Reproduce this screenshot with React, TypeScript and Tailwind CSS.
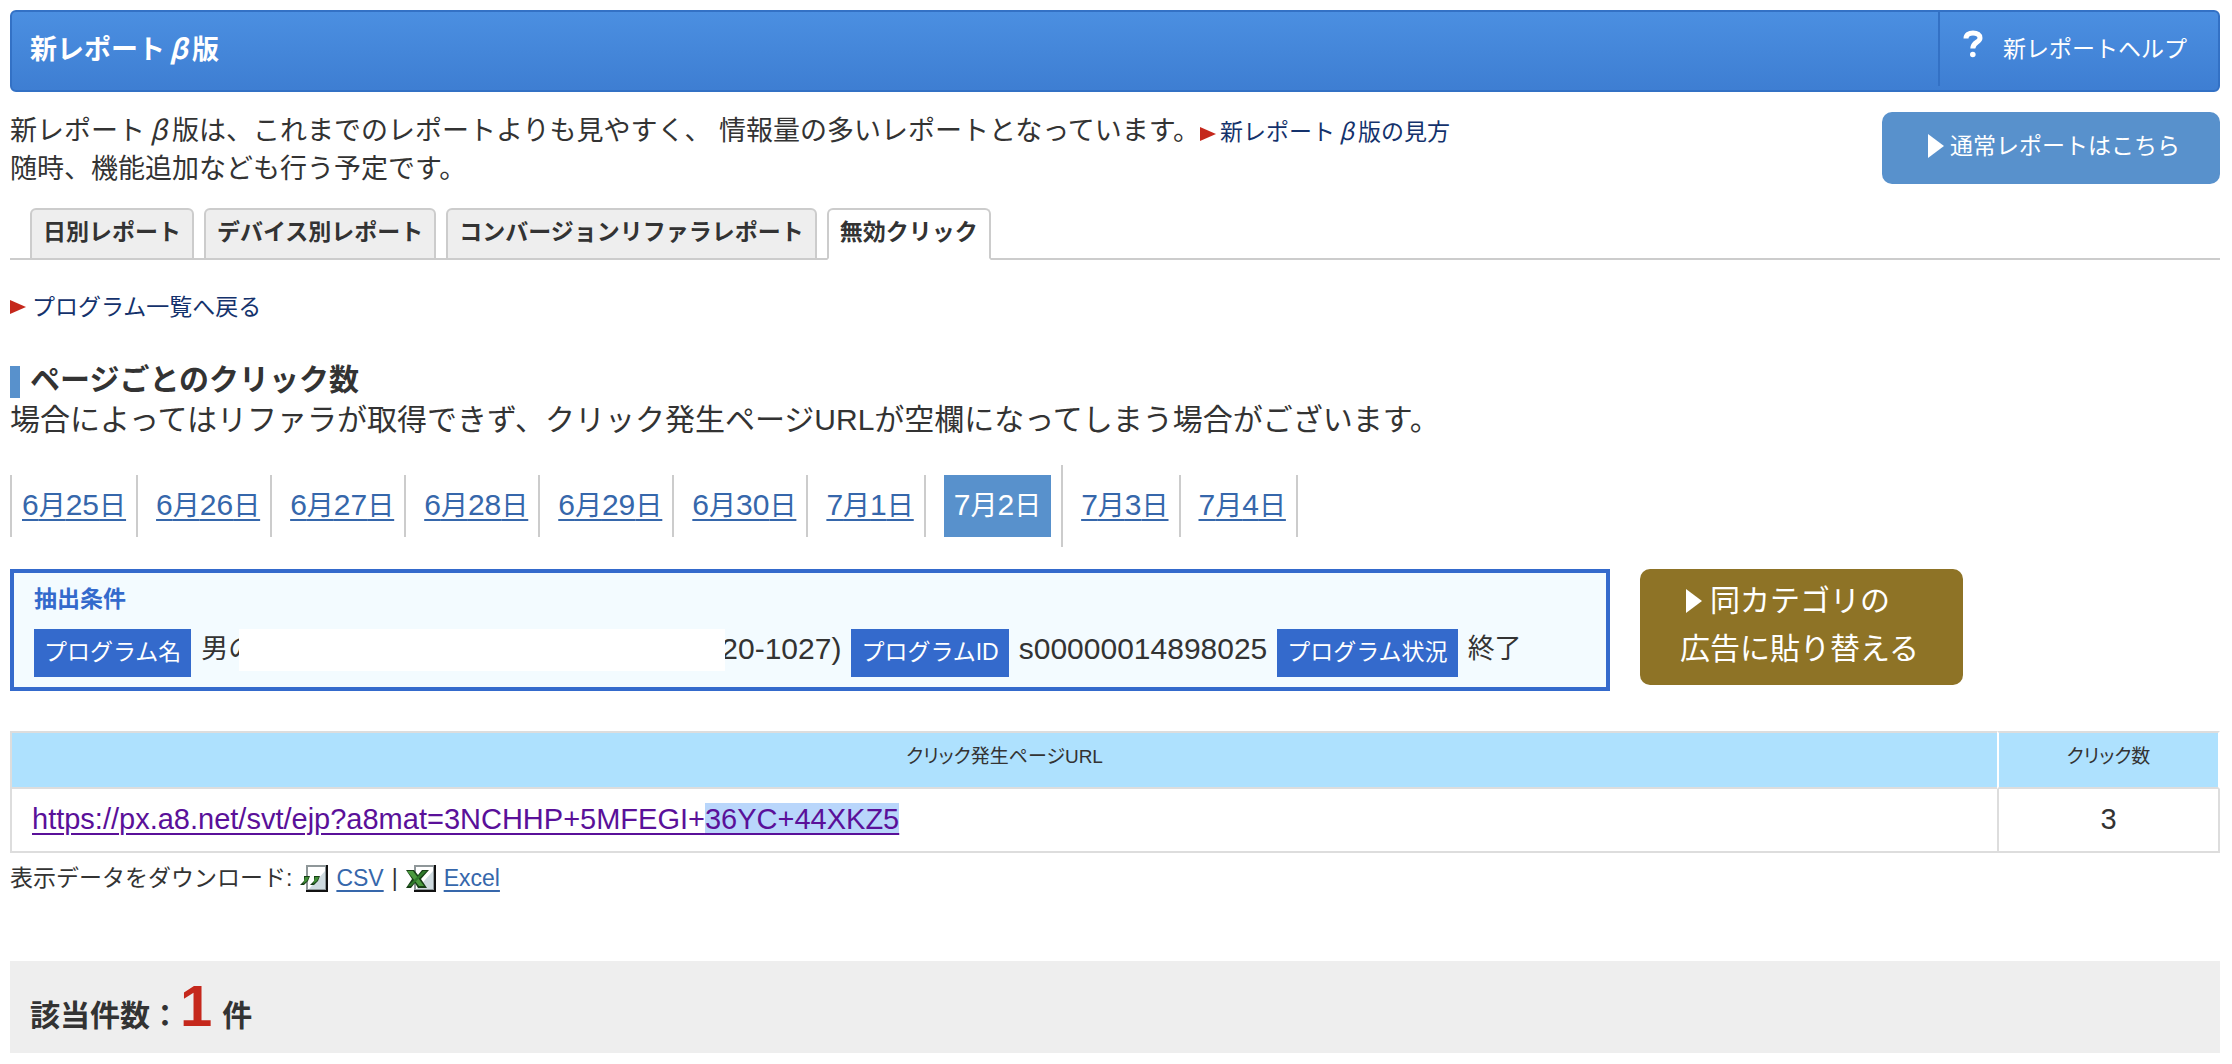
interface TriangleProps {
  className: string;
}

const tabs = [
  { label: "日別レポート", active: false },
  { label: "デバイス別レポート", active: false },
  { label: "コンバージョンリファラレポート", active: false },
  { label: "無効クリック", active: true },
];

const dates = [
  { month: 6, day: 25 },
  { month: 6, day: 26 },
  { month: 6, day: 27 },
  { month: 6, day: 28 },
  { month: 6, day: 29 },
  { month: 6, day: 30 },
  { month: 7, day: 1 },
  { month: 7, day: 2, selected: true },
  { month: 7, day: 3 },
  { month: 7, day: 4 },
];

const Triangle = ({ className }: TriangleProps) => (
  <svg
    className={className}
    viewBox="0 0 10 10"
    preserveAspectRatio="none"
    fill="currentColor"
    aria-hidden="true"
  >
    <path d="M0 0L10 5L0 10Z" />
  </svg>
);

const HelpIcon = () => (
  <svg className="w-5 h-7" viewBox="0 0 20 28" fill="none" aria-hidden="true">
    <path
      d="M3 8.5C3 4.8 6 3 10 3C14.4 3 17 5 17 8C17 12.5 9.8 12 9.8 18.5"
      stroke="#fff"
      strokeWidth="5"
    />
    <circle cx="9.8" cy="24.5" r="2.8" fill="#fff" />
  </svg>
);

/* full-width slanted beta */
const Beta = () => (
  <i className="inline-block w-[1em] text-center leading-none font-['Noto_Sans_CJK_JP',sans-serif]">
    β
  </i>
);

/* sheet with a shaded corner, shared by both download icons */
const Sheet = () => (
  <>
    <path d="M6 1H28V28H6Z" fill="#111" />
    <path d="M6 1H26V26H6Z" fill="#8f9799" />
    <path d="M8 3H25V25H8Z" fill="#fff" />
    <path d="M25 7V25H9Z" fill="#cfdbe0" />
  </>
);

const CsvIcon = () => (
  <svg className="w-7 h-7" viewBox="0 0 28 28" aria-hidden="true">
    <Sheet />
    <path d="M4 12H10L8 17L4 21H0L4 17Z" fill="#173f16" />
    <path d="M14 12H20L18 17L14 21H10L14 17Z" fill="#173f16" />
    <path d="M5 13H9L7 17L3 20Z" fill="#3f8c36" />
    <path d="M15 13H19L17 17L13 20Z" fill="#3f8c36" />
  </svg>
);

const ExcelIcon = () => (
  <svg className="w-[30px] h-7" viewBox="-2 0 30 28" aria-hidden="true">
    <Sheet />
    <path
      d="M-2 6H6L10 11L14 6H21L13 15L19 24H10L7 19L3 24H-2L4 15Z"
      fill="#173f16"
    />
    <path d="M-1 7H5L16 22H11Z" fill="#4b9a3f" />
    <path d="M15 7H19L3 22H0Z" fill="#2f7a2a" />
  </svg>
);

const Header = () => (
  <header className="flex items-start justify-between h-[82px] border-2 border-[#3371c5] rounded-md bg-linear-to-b from-[#4b8fe1] to-[#3e7ed2] text-white">
    <h1 className="pl-[18px] pt-[18px] text-[27px] leading-10 font-bold">
      新レポート
      <Beta />版
    </h1>
    <a
      href="#help"
      className="flex items-start h-[74px] pl-[23px] pr-[31px] border-l-2 border-[#3371c5]"
    >
      <span className="pt-[18px]">
        <HelpIcon />
      </span>
      <span className="pl-5 pt-[17px] text-[23px] leading-10">
        新レポートヘルプ
      </span>
    </a>
  </header>
);

const Intro = () => (
  <div className="flex items-start justify-between pt-5">
    <p className="text-[27px] leading-[38px]">
      新レポート
      <Beta />
      版は、これまでのレポートよりも見やすく、
      情報量の多いレポートとなっています。
      <a href="#guide" className="text-[23px] leading-none text-[#14326c]">
        <Triangle className="inline w-4 h-3.5 mr-1 text-[#c5281c]" />
        新レポート
        <Beta />
        版の見方
      </a>
      <br />
      随時、機能追加なども行う予定です。
    </p>
    <a
      href="#normal"
      className="flex items-center shrink-0 h-[72px] pl-[46px] pr-10 pb-1 rounded-[10px] bg-[#5891cc] text-[23px] leading-8 text-white"
    >
      <Triangle className="w-4 h-6 mr-1.5" />
      通常レポートはこちら
    </a>
  </div>
);

const Tabs = () => (
  <nav className="mt-5 pl-5 border-b-2 border-[#ccc]">
    <ul className="flex gap-2.5 -mb-0.5">
      {tabs.map((tab) => (
        <li key={tab.label}>
          <a
            href="#tab"
            className={
              tab.active
                ? "block h-[52px] px-[11px] pt-1 border-2 border-b-white border-[#ccc] rounded-t-md bg-white text-[23px] leading-9 font-bold"
                : "block h-[52px] px-[11px] pt-1 border-2 border-[#ccc] rounded-t-md bg-[#eee] text-[23px] leading-9 font-bold"
            }
          >
            {tab.label}
          </a>
        </li>
      ))}
    </ul>
  </nav>
);

const DateList = () => (
  <ul className="flex items-center h-[82px] mt-[25px] text-[27px] leading-[60px]">
    {dates.map((date, i) => {
      const label = (
        <>
          <span className="text-[30px]">{date.month}</span>月
          <span className="text-[30px]">{date.day}</span>日
        </>
      );
      if (date.selected) {
        return (
          <li
            key={i}
            className="h-[82px] ml-2 p-2.5 border-r-2 border-[#ccc]"
          >
            <span className="block h-[62px] px-2.5 bg-[#5891cc] text-white">
              {label}
            </span>
          </li>
        );
      }
      return (
        <li
          key={i}
          className="h-[62px] ml-2 px-2.5 border-r-2 border-[#ccc] first:ml-0 first:border-l-2"
        >
          <a
            href="#date"
            className="text-[#3667ab] underline decoration-2 underline-offset-4"
          >
            {label}
          </a>
        </li>
      );
    })}
  </ul>
);

const Tag = ({ children }: { children: string }) => (
  <dt className="h-12 px-2.5 pt-0.5 bg-[#346acc] text-[23px] leading-[42px] text-white">
    {children}
  </dt>
);

const Conditions = () => (
  <div className="flex items-start gap-[30px] mt-[22px]">
    <section className="w-[1600px] h-[122px] px-5 pt-1.5 border-4 border-[#346acc] bg-[#f3fbff]">
      <h3 className="text-[23px] leading-10 font-bold text-[#346acc]">
        抽出条件
      </h3>
      <dl className="flex items-start gap-2.5 mt-2.5 text-[27px] leading-10">
        <Tag>プログラム名</Tag>
        <dd className="flex">
          男の
          {/* program name is blanked out */}
          <span className="relative w-[486px] h-[42px] -ml-4 -mr-1 bg-white" />
          <span className="text-[30px]">20-1027)</span>
        </dd>
        <Tag>プログラムID</Tag>
        <dd className="text-[30px]">s00000014898025</dd>
        <Tag>プログラム状況</Tag>
        <dd>終了</dd>
      </dl>
    </section>
    <a
      href="#category"
      className="block h-[116px] pl-10 pr-11 pt-2 rounded-[10px] bg-[#8e7326] text-[30px] leading-12 text-white"
    >
      <span className="flex items-center pl-1.5">
        <Triangle className="w-4 h-6 mr-2" />
        同カテゴリの
      </span>
      広告に貼り替える
    </a>
  </div>
);

const ClickTable = () => (
  <table className="w-full mt-10 border-separate border-spacing-0">
    <thead className="bg-[#aee1fe] text-[19px] leading-[30px]">
      <tr className="h-[58px]">
        <th className="pb-1.5 border-y-2 border-l-2 border-[#ddd] font-normal [font-feature-settings:'palt']">
          クリック発生ページURL
        </th>
        <th className="w-[223px] pb-1.5 border-y-2 border-x-2 border-y-[#ddd] border-x-white font-normal [font-feature-settings:'palt']">
          クリック数
        </th>
      </tr>
    </thead>
    <tbody className="text-[29px] leading-[60px]">
      <tr className="h-16">
        <td className="pl-5 pb-0.5 border-b-2 border-l-2 border-[#ddd]">
          <a
            href="#url"
            className="text-[#5a1099] underline decoration-2 underline-offset-4"
          >
            https://px.a8.net/svt/ejp?a8mat=3NCHHP+5MFEGI+
            <span className="bg-[#b9d6fb]">36YC+44XKZ5</span>
          </a>
        </td>
        <td className="pb-0.5 border-b-2 border-x-2 border-[#ddd] text-center">
          3
        </td>
      </tr>
    </tbody>
  </table>
);

const Download = () => (
  <p className="flex items-center gap-2 h-[50px] text-[23px] leading-10">
    表示データをダウンロード:
    <CsvIcon />
    <a
      href="#csv"
      className="text-[#3667ab] underline decoration-2 underline-offset-4"
    >
      CSV
    </a>
    |
    <ExcelIcon />
    <a
      href="#excel"
      className="text-[#3667ab] underline decoration-2 underline-offset-4"
    >
      Excel
    </a>
  </p>
);

const App = () => {
  return (
    <main className="py-2.5 pl-2.5 pr-3 bg-white text-[#333] font-['Liberation_Sans','Noto_Sans_CJK_JP',sans-serif]">
      <Header />
      <Intro />
      <Tabs />
      <a
        href="#list"
        className="flex items-center w-fit mt-[27px] text-[23px] leading-10 text-[#14326c]"
      >
        <Triangle className="w-4 h-3.5 mr-1.5 text-[#c5281c]" />
        プログラム一覧へ戻る
      </a>
      <section className="mt-[33px] text-[30px] leading-10">
        <h2 className="flex items-center font-bold">
          <span className="w-2.5 h-8 mr-2.5 mt-1 bg-[#5891cc]" />
          ページごとのクリック数
        </h2>
        <p>
          場合によってはリファラが取得できず、クリック発生ページURLが空欄になってしまう場合がございます。
        </p>
      </section>
      <DateList />
      <Conditions />
      <ClickTable />
      <Download />
      <p className="flex items-baseline h-[92px] mt-[58px] px-5 bg-[#eee] text-[30px] leading-[90px] font-bold">
        該当件数：
        <strong className="mr-2.5 text-[58px] text-[#c5281c]">1</strong>
        件
      </p>
    </main>
  );
};

export default App;
